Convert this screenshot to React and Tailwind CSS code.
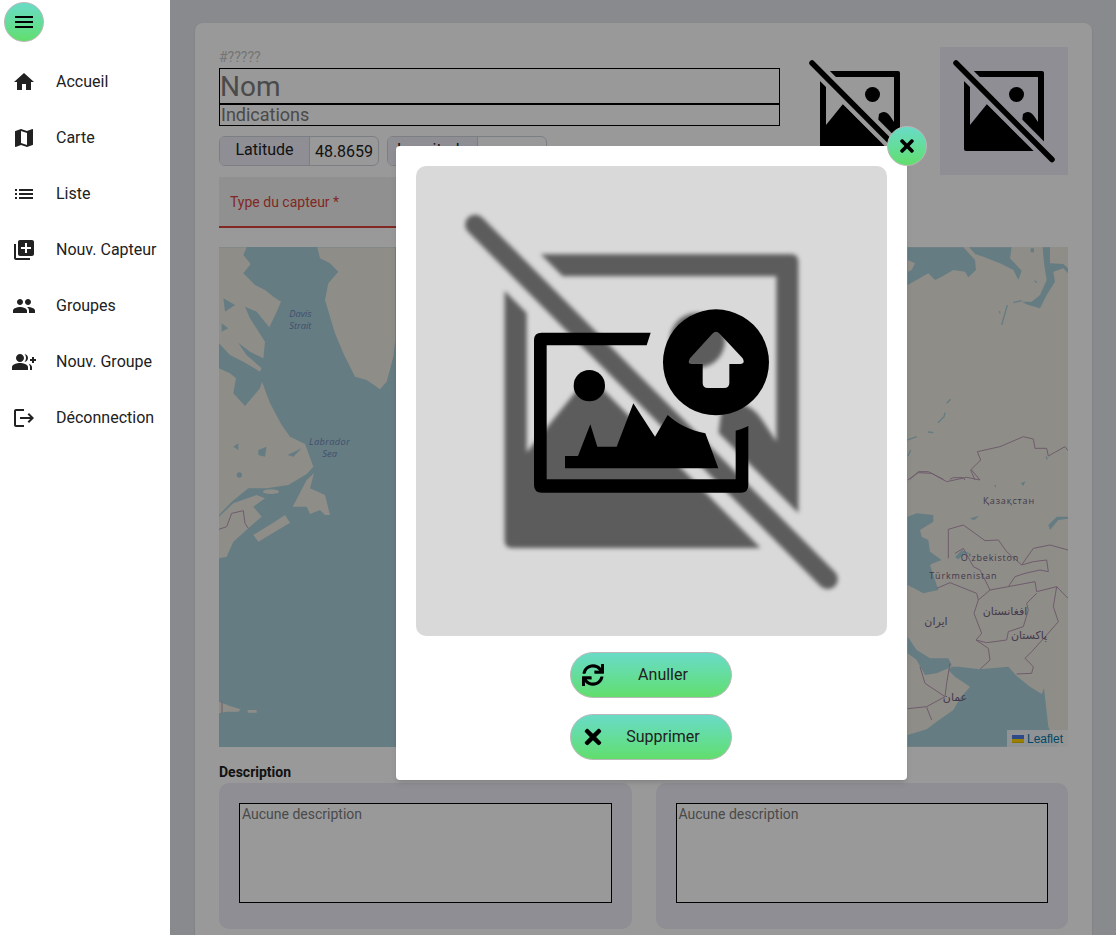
import React from "react";
import { MdHome, MdMap, MdList, MdLibraryAdd, MdPeople, MdGroupAdd, MdLogout, MdMenu } from "react-icons/md";
import { FaSync, FaTimes } from "react-icons/fa";

const nav = [
  [MdHome, "Accueil"],
  [MdMap, "Carte"],
  [MdList, "Liste"],
  [MdLibraryAdd, "Nouv. Capteur"],
  [MdPeople, "Groupes"],
  [MdGroupAdd, "Nouv. Groupe"],
  [MdLogout, "Déconnection"],
];

function NoImage({ id, className }) {
  return (
    <svg viewBox="0 0 128 128" className={className}>
      <mask id={id} maskUnits="userSpaceOnUse" x="0" y="0" width="128" height="128">
        <rect width="128" height="128" fill="#fff" />
        <path d="M10 10 L118 118.5" stroke="#000" strokeWidth="14" />
      </mask>
      <g mask={`url(#${id})`} fill="currentColor">
        <path
          fillRule="evenodd"
          d="M26 24 H102 Q104 24 104 26 V102 Q104 104 102 104 H26 Q24 104 24 102 V26 Q24 24 26 24 Z M30 30 V98 H98 V30 Z"
        />
        <circle cx="76.5" cy="47.5" r="7.5" />
        <path d="M27 101 V81 L30 78 L47 57 L80 90 L83 67 Q89 62 94 69 L98 75 H101 V101 Z" />
      </g>
      <path d="M16 16 L112 112.5" stroke="currentColor" strokeWidth="5.5" strokeLinecap="round" fill="none" />
    </svg>
  );
}

function WorldMap() {
  const land = "#eeebe3";
  const border = "#b79ab4";
  const water = "#a8cfda";
  return (
    <svg viewBox="219 247 849 500" className="block h-full w-full" preserveAspectRatio="none">
      <rect x="219" y="247" width="849" height="500" fill={water} />
      <g transform="translate(210 240) scale(0.33333)" fill={land}>
        <path d="M27 22 H110 L100 45 L122 72 L100 100 L135 135 L165 150 L190 170 L213 185 L200 215 L178 262 L140 215 L105 200 L120 235 L165 305 L160 355 L120 335 L85 308 L110 345 L155 385 L150 395 L100 365 L60 345 L27 310 Z" />
        <path d="M27 385 L60 400 L78 415 L70 460 L105 498 L150 445 L156 425 L180 490 L215 555 L240 590 L285 612 L310 680 L290 702 L235 735 L170 745 L115 745 L65 785 L27 825 Z" />
        <path d="M27 830 L70 790 L140 765 L165 775 L130 800 L155 830 L115 865 L70 905 L50 950 L27 955 Z" />
        <path d="M130 885 L190 848 L225 825 L240 848 L145 905 Z" />
        <path d="M248 800 L290 720 L312 700 L300 745 L345 765 L360 825 L345 825 L330 810 L300 822 L290 800 Z" />
        <ellipse cx="183" cy="755" rx="24" ry="7" />
        <path d="M322 22 L330 55 L360 70 L385 95 L355 130 L345 180 L375 280 L400 340 L435 410 L470 420 L510 448 L530 425 L550 350 L556 300 V22 Z" />
        <path d="M27 1385 L60 1398 L92 1408 L85 1415 L50 1415 L27 1420 Z M113 1410 H140 V1418 H113 Z" />
        <g fill={water}>
          <path d="M70 620 L85 610 L85 630 Z M145 630 L170 620 L165 650 L145 645 Z M232 645 L275 625 L250 650 Z" />
          <circle cx="88" cy="705" r="8" />
          <path d="M85 310 L135 365 L110 345 Z M40 175 L75 195 L45 215 Z M35 250 L55 265 L35 275 Z" />
        </g>
        <path d="M27 868 L50 860 L65 820 L100 812 L105 850 L115 865" fill="none" stroke={border} strokeWidth="3" />
        <path d="M36 1385 V1420" fill="none" stroke={border} strokeWidth="3" />
        <g fontFamily="'Open Sans',sans-serif" fontStyle="italic" fontSize="28" textAnchor="middle" fill="#6e85b5" stroke="none">
          <text x="271" y="232">Davis</text>
          <text x="271" y="267">Strait</text>
          <text x="359" y="614" letterSpacing="1">Labrador</text>
          <text x="359" y="650">Sea</text>
        </g>
      </g>

      <rect x="900" y="247" width="168" height="500" fill={land} />
      <g transform="translate(900 240) scale(0.33333)">
        <g fill={water}>
          <path d="M23 22 H190 L225 60 L228 90 L205 112 L195 95 L160 90 L125 110 L105 120 L85 100 L23 135 Z" />
          <path d="M208 22 H335 L330 55 L365 92 L355 120 L340 90 L300 70 L250 50 L225 42 Z" />
          <path d="M428 22 H450 V70 L490 72 L504 85 V100 L490 85 L460 95 L465 125 L440 165 L420 205 L385 195 L365 185 L395 185 L420 165 L440 120 L432 70 Z" />
          <path d="M392 25 h10 v12 h-10 Z M402 120 l10 6 l-4 4 Z M296 212 l6 3 l-3 7 Z" />
        </g>
        <path
          fill="none"
          stroke={water}
          strokeWidth="4"
          d="M140 490 L152 478 M114 548 L132 530 L135 518 M84 576 L100 578 M23 600 L50 590 M24 648 L32 630 M340 188 L365 182 M322 195 L305 255 M438 650 L442 658"
        />
        <path fill={land} d="M23 60 L45 70 L35 90 L23 95 Z" />
        <path
          fill="none"
          stroke={border}
          strokeWidth="3"
          d="M30 718 L55 695 L85 695 L130 718 M150 718 L160 713 L190 713 L195 720 M225 720 L212 690 L242 660 L232 635 L300 620 L370 590 L400 597 L405 625 L440 625 L445 648 L495 620 L504 632"
        />
      </g>
      <g transform="translate(900 470) scale(0.33333)">
        <g fill={water}>
          <path d="M23 140 L50 130 L100 135 L100 155 L60 180 L65 200 L85 210 L90 245 L125 270 L100 280 L90 285 L115 360 L70 370 L23 345 Z" />
          <path d="M155 590 L175 590 L240 598 L325 590 L350 618 L390 650 L425 672 L432 655 L445 770 L475 830 H23 V795 L80 778 L110 755 L160 720 L180 685 L210 650 L165 620 L145 600 Z" />
          <path d="M23 500 L50 540 L90 565 L145 565 L155 585 L145 595 L110 610 L75 615 L50 570 L23 550 Z" />
          <path d="M165 262 L185 240 L215 252 L195 250 L175 268 Z" />
          <path d="M445 165 L470 140 L504 140 V146 L475 150 L450 180 Z" />
          <path d="M210 145 l28 -8 l-16 14 Z M362 40 l14 -6 l-6 14 Z M282 45 l6 0 l0 8 Z" />
        </g>
        <path
          fill="none"
          stroke={border}
          strokeWidth="3"
          d="M23 30 L55 8 L95 10 L140 35 L200 22 L240 30 L215 0 M145 265 V178 L190 165 L255 212 L295 210 L320 245 L365 285 L400 235 L450 225 L504 240 M110 355 L150 338 L230 370 L235 390 L270 360 L325 350 L405 335 L410 365 L470 350 L504 385 M235 390 L222 430 L245 490 L228 510 L265 535 L270 570 L240 598 M228 510 L260 518 L320 510 L325 485 L370 470 L385 420 L380 400 L410 370 M470 350 L460 410 L475 455 L440 495 L395 545 L375 565 L400 590 L395 610 L350 612 M150 580 L140 640 L135 680 L75 640 L60 590 M23 716 L80 710 L135 680 M95 750 L80 712 M270 360 L240 300 L220 290 L190 235 L165 250 M365 285 L400 275 L440 270 L445 305 L420 300 L375 310 L345 320 L325 350"
        />
        <g fontFamily="'Open Sans',sans-serif" fontSize="27" fill="#6f5f7d" textAnchor="middle" letterSpacing="2.5">
          <text x="327" y="103">Қазақстан</text>
          <text x="270" y="272">O'zbekiston</text>
          <text x="190" y="327">Türkmenistan</text>
        </g>
        <g fontFamily="'DejaVu Sans',sans-serif" fontSize="33" fill="#6f5f7d" textAnchor="middle">
          <text x="108" y="465">ایران</text>
          <text x="315" y="435">افغانستان</text>
          <text x="387" y="508">پاکستان</text>
          <text x="165" y="692">عمان</text>
        </g>
      </g>
    </svg>
  );
}

const gradient = "bg-gradient-to-b from-[#69dbc6] to-[#62de6b] border border-[#b8b8b8]";

export default function App() {
  return (
    <div className="relative flex h-[935px] w-full overflow-hidden font-[Roboto,sans-serif] text-[#212121]">
      <aside className="relative z-20 w-[170px] shrink-0 bg-white">
        <div className="h-[54px] pl-1 pt-[2px]">
          <button className={`flex h-10 w-10 items-center justify-center rounded-full ${gradient}`}>
            <MdMenu size={24} className="text-black" />
          </button>
        </div>
        <nav>
          {nav.map(([Icon, label]) => (
            <div key={label} className="flex h-14 items-center gap-5 px-3 text-base">
              <Icon size={24} className="shrink-0" />
              <span className="whitespace-nowrap">{label}</span>
            </div>
          ))}
        </nav>
      </aside>

      <main className="relative min-w-0 flex-1 bg-[#e5e7eb] pl-[25px] pr-6 pt-[23px]">
        <div className="rounded-lg bg-white p-6 shadow-sm">
          <div className="flex h-32 gap-4">
            <div className="min-w-0 flex-1">
              <div className="h-[21px] text-sm leading-5 text-[#c4c4c4]">#?????</div>
              <div className="h-9 border-[1.5px] border-black text-[28px] leading-[35px] text-[#7c7c7c]">Nom</div>
              <div className="h-[22px] border-[1.5px] border-black pl-px text-lg leading-[19px] text-[#7c7c7c]">Indications</div>
              <div className="mt-[10px] flex gap-2">
                <div className="flex h-[30px] w-40 rounded-md border border-[#ced4da] text-base">
                  <div className="flex w-[90px] items-center justify-center rounded-l-md border-r border-[#ced4da] bg-[#eeedf7] pb-[2px]">Latitude</div>
                  <div className="flex flex-1 items-center justify-center pt-[2px]">48.8659</div>
                </div>
                <div className="flex h-[30px] w-40 rounded-md border border-[#ced4da] text-base">
                  <div className="flex w-[90px] items-center justify-center rounded-l-md border-r border-[#ced4da] bg-[#eeedf7] pb-[2px]">Longitude</div>
                  <div className="flex-1" />
                </div>
              </div>
            </div>
            <NoImage id="noimg-a" className="h-32 w-32 shrink-0 text-black blur-[0.5px]" />
            <div className="h-32 w-32 shrink-0 bg-[#eeedf7]">
              <NoImage id="noimg-b" className="h-32 w-32 text-black blur-[0.5px]" />
            </div>
          </div>

          <div className="mt-[2px] flex h-[51px] w-[300px] items-center border-b-2 border-[#d8443c] bg-[#f0f0f0] pl-[11px] text-sm text-[#d8443c]">
            Type du capteur *
          </div>

          <div className="relative mt-[19px] h-[500px]">
            <WorldMap />
            <div className="absolute bottom-0 right-0 flex h-[17px] items-center gap-[3px] bg-white/80 px-[5px] font-['Liberation_Sans',sans-serif] text-xs text-[#0078a8]">
              <svg width="12" height="8" viewBox="0 0 12 8">
                <path fill="#4C7BE1" d="M0 0h12v4H0z" />
                <path fill="#FFD500" d="M0 4h12v3H0z" />
                <path fill="#E0BC00" d="M0 7h12v1H0z" />
              </svg>
              Leaflet
            </div>
          </div>

          <div className="mt-[15px] h-[21px] text-sm font-bold leading-5">Description</div>
          <div className="grid grid-cols-2 gap-6">
            {[0, 1].map((i) => (
              <div key={i} className="rounded-[10px] bg-[#eeedf7] px-5 pb-[26px] pt-5">
                <div className="h-[100px] border border-black bg-white px-0.5 text-sm leading-5 text-[#7c7c7c]">Aucune description</div>
              </div>
            ))}
          </div>
        </div>

        <div className="absolute inset-0 bg-black/40" />

        <div className="absolute left-[226px] top-[146px] h-[634px] w-[511px] rounded bg-white p-5 shadow-md">
          <button className={`absolute -right-5 -top-5 flex h-10 w-10 items-center justify-center rounded-full ${gradient}`}>
            <FaTimes size={20} className="text-black" />
          </button>
          <div className="relative h-[470px] w-[471px] overflow-hidden rounded-[10px] bg-[#d9d9d9]">
            <NoImage id="noimg-c" className="h-full w-full text-[#5c5c5c] blur-[2px]" />
            <svg viewBox="0 0 1260 1260" className="absolute left-6 top-6 h-[420px] w-[420px]">
              <path d="M632 428 H305 Q282 428 282 450 V885 Q282 908 305 908 H903 Q925 908 925 885 V708 Q905 718 887 722 V868 H320 V466 H620 Z" />
              <circle cx="448" cy="587" r="47" />
              <path d="M375 835 V798 H414 L451 703 L472 770 H530 L580 640 L645 740 L683 675 C710 700 750 722 796 730 L835 835 Z" />
              <path
                fillRule="evenodd"
                d="M828 358 A159 159 0 1 1 827.9 358 Z M817 431 L750 505 Q740 522 757 522 H788 V578 Q788 594 804 594 H852 Q868 594 868 578 V522 H900 Q917 522 908 505 L839 431 Q828 420 817 431 Z"
              />
            </svg>
          </div>
          <div className="mt-4 flex flex-col items-start gap-4 pl-[154px]">
            {[
              [<FaSync key="s" size={22} className="text-black" />, "Anuller"],
              [<FaTimes key="t" size={24} className="text-black" />, "Supprimer"],
            ].map(([icon, label]) => (
              <button key={label} className={`flex h-[46px] w-[162px] items-center rounded-[23px] px-[10px] text-base ${gradient}`}>
                <span className="flex w-6 justify-center">{icon}</span>
                <span className="flex-1 text-center">{label}</span>
              </button>
            ))}
          </div>
        </div>
      </main>
    </div>
  );
}
